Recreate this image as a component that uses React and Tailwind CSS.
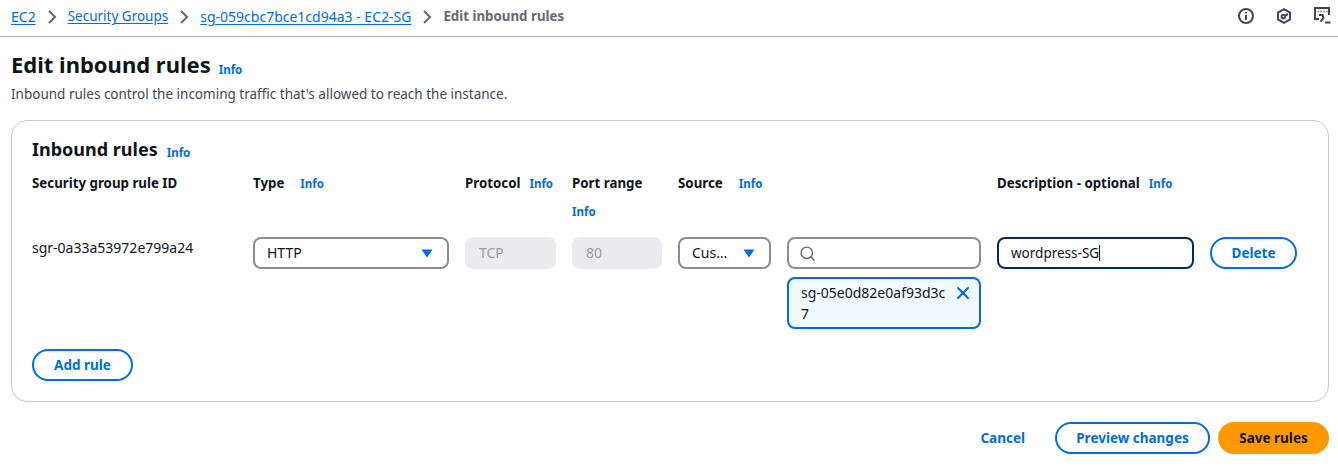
import { Search, X } from "lucide-react"

function Info({ className = "" }) {
  return <a className={"text-[11.5px] font-bold leading-[16px] text-[#006ce0] " + className}>Info</a>
}

function Chevron() {
  return (
    <svg width="16" height="16" viewBox="0 0 16 16" fill="none" stroke="#656871" strokeWidth="2">
      <path d="M5 2l6 6-6 6" />
    </svg>
  )
}

function Caret() {
  return (
    <svg width="12" height="9" viewBox="0 0 12 9" fill="#006ce0">
      <path d="M0.5 0.5h11L6 8.5z" />
    </svg>
  )
}

function Crumb({ children, className = "" }) {
  return <a className={"text-[#006ce0] underline underline-offset-2 " + className}>{children}</a>
}

function ColHead({ children }) {
  return <span className="text-[13.3px] font-bold leading-[18px] text-[#0f141a]">{children}</span>
}

function Select({ label }) {
  return (
    <div className="flex h-8 items-center justify-between rounded-lg border-2 border-[#8c8c94] pl-3 pr-[14px] text-[14px] leading-[20px] text-[#0f141a]">
      <span>{label}</span>
      <Caret />
    </div>
  )
}

function Disabled({ label }) {
  return (
    <div className="flex h-8 items-center rounded-lg bg-[#ebebf0] px-[14px] text-[14px] leading-[20px] text-[#9a9ca3]">{label}</div>
  )
}

function OutlineButton({ children, className = "" }) {
  return (
    <button className={"h-8 rounded-full border-2 border-[#006ce0] text-[13.5px] font-bold text-[#006ce0] " + className}>
      {children}
    </button>
  )
}

export default function App() {
  return (
    <div className="h-[476px] w-[1338px] overflow-hidden bg-white font-['Noto_Sans',sans-serif] text-[#0f141a]">
      <div className="flex h-[37px] items-center justify-between border-b border-[#b4b4bb] pb-[3px] pl-[11px] pr-[7px]">
        <div className="flex items-center text-[13.5px]">
          <Crumb className="text-[14px]">EC2</Crumb>
          <span className="mx-[8px]"><Chevron /></span>
          <Crumb>Security Groups</Crumb>
          <span className="mx-[8px]"><Chevron /></span>
          <Crumb className="text-[14px]">sg-059cbc7bce1cd94a3 - EC2-SG</Crumb>
          <span className="mx-[8px]"><Chevron /></span>
          <span className="text-[13.3px] font-bold text-[#656871]">Edit inbound rules</span>
        </div>
        <div className="mb-[2px] flex items-center gap-[22px]">
          <svg width="16" height="16" viewBox="0 0 16 16" fill="none" stroke="#424650" strokeWidth="2">
            <circle cx="8" cy="8" r="7" />
            <path d="M8 7v5M8 4v1.6" />
          </svg>
          <svg width="16" height="16" viewBox="0 0 16 16" fill="none" stroke="#424650" strokeWidth="2">
            <path d="M8 1.2l6 3.4v6.8L8 14.8l-6-3.4V4.6z" />
            <circle cx="7.4" cy="8.6" r="1.8" />
            <path d="M9 7.6l3-1.6" />
          </svg>
          <svg width="17" height="17" viewBox="0 0 17 17" fill="none" stroke="#424650" strokeWidth="2">
            <path d="M5 12H1V1h14v7" />
            <path d="M3.5 4.5h1M6.5 4.5h1M9.5 4.5h1M12.5 4.5h1" strokeWidth="1.5" />
            <path d="M5 8h3.5l1 3-3 3.5M11 15.5h5.5" />
          </svg>
        </div>
      </div>

      <div className="px-[11px] pr-[9px]">
        <div className="mt-[13px] flex items-end">
          <h1 className="text-[22px] font-bold leading-[28px]">Edit inbound rules</h1>
          <Info className="ml-2" />
        </div>
        <p className="mt-[7px] text-[13.5px] leading-[18px] text-[#424650]">
          Inbound rules control the incoming traffic that's allowed to reach the instance.
        </p>

        <div className="mt-[17px] h-[282px] rounded-2xl border border-[#c6c6cd] px-5 pt-4">
          <div className="flex items-end">
            <h2 className="text-[18px] font-bold leading-[24px]">Inbound rules</h2>
            <Info className="ml-[9px]" />
          </div>

          <div className="mt-[13px] grid grid-cols-[205px_196px_91px_90px_93px_194px_197px_87px] items-start gap-x-4">
            <ColHead>Security group rule ID</ColHead>
            <div className="flex items-center gap-4"><ColHead>Type</ColHead><Info className="mt-[2px]" /></div>
            <div className="flex items-center gap-[9px]"><ColHead>Protocol</ColHead><Info className="mt-[2px]" /></div>
            <div className="flex flex-col items-start gap-[12px]"><ColHead>Port range</ColHead><Info /></div>
            <div className="flex items-center gap-4"><ColHead>Source</ColHead><Info className="mt-[2px]" /></div>
            <div />
            <div className="flex items-center gap-[9px]"><ColHead>Description - optional</ColHead><Info className="mt-[2px]" /></div>
            <div />

            <div className="col-span-8 h-[17px]" />

            <span className="pt-[2px] text-[14px] leading-[18px]">sgr-0a33a53972e799a24</span>
            <Select label="HTTP" />
            <Disabled label="TCP" />
            <Disabled label="80" />
            <Select label="Cus…" />
            <div className="flex flex-col gap-2">
              <div className="flex h-8 items-center rounded-lg border-2 border-[#8c8c94] pl-[10px]">
                <Search size={17} strokeWidth={2} color="#656871" />
              </div>
              <div className="flex h-[52px] items-start justify-between rounded-lg border-2 border-[#006ce0] bg-[#f0fbff] pl-3 pr-[6px] pt-[3px]">
                <span className="w-[146px] break-all text-[14px] leading-[21px]">sg-05e0d82e0af93d3c7</span>
                <X size={20} strokeWidth={2.5} color="#006ce0" className="mt-[1px]" />
              </div>
            </div>
            <div className="flex h-8 items-center rounded-lg border-2 border-[#002a66] pl-3 text-[13.5px]">
              wordpress-SG<span className="h-4 w-px bg-[#0f141a]" />
            </div>
            <OutlineButton>Delete</OutlineButton>
          </div>

          <OutlineButton className="mt-5 w-[101px]">Add rule</OutlineButton>
        </div>

        <div className="mt-5 flex items-center justify-end">
          <a className="mr-[30px] text-[13.5px] font-bold text-[#006ce0]">Cancel</a>
          <OutlineButton className="w-[155px]">Preview changes</OutlineButton>
          <button className="ml-2 h-8 w-[111px] rounded-full bg-[#ff9900] text-[13.5px] font-bold text-[#0f141a]">Save rules</button>
        </div>
      </div>
    </div>
  )
}
